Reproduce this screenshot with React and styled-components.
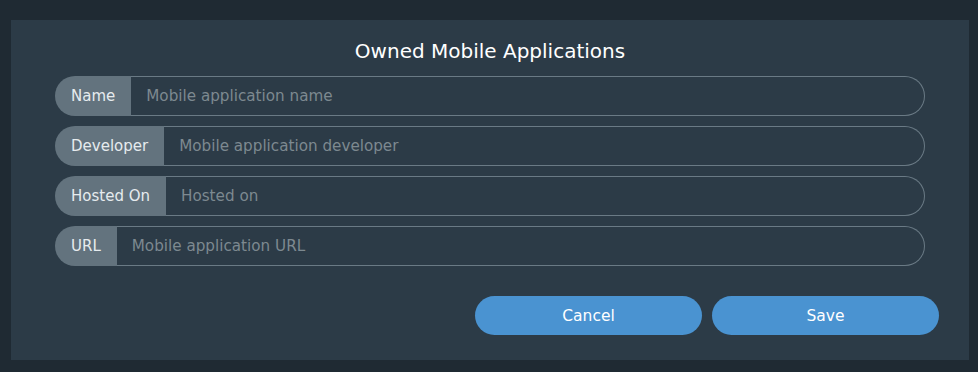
import React from 'react'
import styled, { createGlobalStyle } from 'styled-components'

const Global = createGlobalStyle`
  body {
    margin: 0;
    background: #1f2a33;
    font-family: "DejaVu Sans", "Open Sans", sans-serif;
  }
`

const Page = styled.div`
  width: 978px;
  height: 372px;
  box-sizing: border-box;
  padding: 20px 9px 12px 11px;
`

const Panel = styled.div`
  height: 340px;
  background: #2c3b47;
  display: flex;
  flex-direction: column;
  box-sizing: border-box;
  padding: 19px 30px 0 44px;
`

const Title = styled.h2`
  margin: 0 14px 13px 0;
  text-align: center;
  color: #ffffff;
  font-weight: 400;
  font-size: 20px;
  line-height: 24px;
`

const Fields = styled.div`
  display: flex;
  flex-direction: column;
  gap: 10px;
  margin-right: 14px;
`

const Row = styled.div`
  display: flex;
  height: 40px;
`

const Label = styled.span`
  display: flex;
  align-items: center;
  padding: 0 16px;
  background: #63737e;
  color: #e6ebee;
  font-size: 15px;
  border-radius: 20px 0 0 20px;
  white-space: nowrap;
`

const Input = styled.input`
  flex: 1;
  min-width: 0;
  box-sizing: border-box;
  height: 40px;
  margin: 0;
  padding: 0 15px;
  background: transparent;
  border: 1px solid #6a7a85;
  border-left: none;
  border-radius: 0 20px 20px 0;
  color: #e3e8ec;
  font-family: inherit;
  font-size: 15.2px;
  outline: none;
  &::placeholder {
    color: #7d8990;
  }
`

const Actions = styled.div`
  display: flex;
  justify-content: flex-end;
  gap: 10px;
  margin-top: 30px;
`

const Button = styled.button`
  width: 227px;
  height: 39px;
  border: none;
  border-radius: 20px;
  background: #4a93d1;
  color: #ffffff;
  font-family: inherit;
  font-size: 15.5px;
  cursor: pointer;
`

const fields = [
  { label: 'Name', placeholder: 'Mobile application name' },
  { label: 'Developer', placeholder: 'Mobile application developer' },
  { label: 'Hosted On', placeholder: 'Hosted on' },
  { label: 'URL', placeholder: 'Mobile application URL' },
]

export default function App() {
  return (
    <Page>
      <Global />
      <Panel>
        <Title>Owned Mobile Applications</Title>
        <Fields>
          {fields.map((f) => (
            <Row key={f.label}>
              <Label>{f.label}</Label>
              <Input placeholder={f.placeholder} />
            </Row>
          ))}
        </Fields>
        <Actions>
          <Button>Cancel</Button>
          <Button>Save</Button>
        </Actions>
      </Panel>
    </Page>
  )
}
